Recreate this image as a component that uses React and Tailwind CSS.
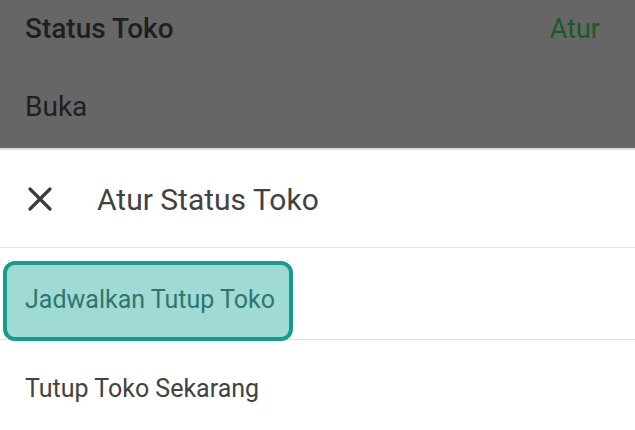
export default function App() {
  return (
    <div className="w-[635px] h-[430px] overflow-hidden bg-white font-['Roboto',sans-serif]">
      {/* dimmed page behind the sheet */}
      <div className="h-[148px] bg-[#666666] px-[25px]">
        <div className="flex h-[58px] items-center justify-between">
          <span className="text-[28px] font-medium leading-none text-[#1f1f1f]">Status Toko</span>
          <span className="pr-[10px] text-[27px] leading-none text-[#1e5a24]">Atur</span>
        </div>
        <div className="flex h-[98px] items-center">
          <span className="text-[28px] leading-none text-[#1f1f1f]">Buka</span>
        </div>
      </div>
      <div className="h-[2px] bg-[#dcdcdc]" />

      {/* bottom sheet */}
      <div className="flex h-[98px] items-center border-b border-[#e6e6e6]">
        <div className="flex w-[97px] justify-center pr-[17px]">
          <svg width="30" height="30" viewBox="0 0 24 24" fill="none" stroke="#3a3a3a" strokeWidth="2.6" strokeLinecap="round">
            <path d="M4 4L20 20M20 4L4 20" />
          </svg>
        </div>
        <span className="pt-[3px] text-[30px] leading-none text-[#424242]">Atur Status Toko</span>
      </div>

      <div className="relative h-[92px]">
        <div className="absolute bottom-0 left-0 right-0 h-px bg-[#e0e0e0]" />
        <div className="absolute left-[3px] top-[13px] flex h-[80px] w-[290px] items-center rounded-[12px] border-4 border-[#179b8c] bg-[#9fdad4] pl-[18px]">
          <span className="pb-[4px] text-[25px] leading-none text-[#2e776c]">Jadwalkan Tutup Toko</span>
        </div>
      </div>

      <div className="flex h-[94px] items-center px-[25px]">
        <span className="pt-[2px] text-[25px] leading-none text-[#424242]">Tutup Toko Sekarang</span>
      </div>
    </div>
  );
}
